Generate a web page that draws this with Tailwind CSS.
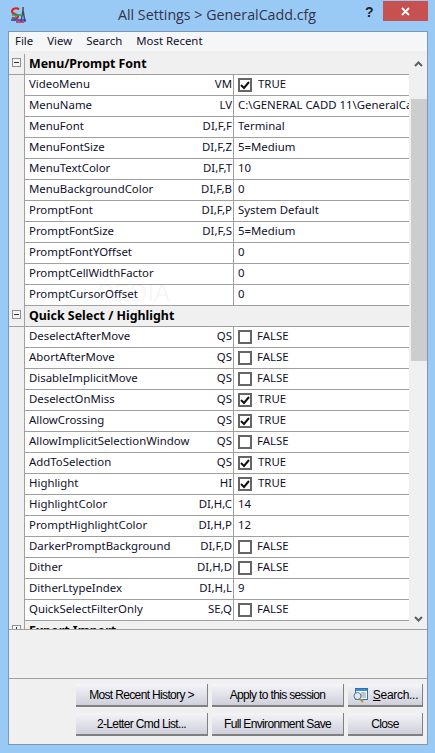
<!DOCTYPE html>
<html lang="en">
<head>
  <meta charset="UTF-8" />
  <title>All Settings</title>
  <script src="https://cdn.jsdelivr.net/npm/@tailwindcss/browser@4"></script>
</head>
<body class="bg-[#99c9f5] h-[753px] w-[435px] overflow-hidden relative font-['Noto_Sans',sans-serif] text-[11.4px] text-[#10102a]">
  <!-- Title bar -->
  <div class="h-[31px] flex relative">
    <svg class="absolute left-[10px] top-[6px]" width="17" height="18" viewBox="0 0 17 18">
      <path d="M9 3.500C7 1.500 2 2 2 5.500c0 3 6 2 6 5 0 2.500-4 2.500-6 1" fill="none" stroke="#e02020" stroke-width="2"/>
      <path d="M2 9h9M4 15l2-5" stroke="#20a050" stroke-width="1.300" fill="none"/>
      <path d="M11 16l2-12 2 12M13 1v4" stroke="#405060" stroke-width="1.500" fill="none"/>
      <path d="M1 14h15" stroke="#2040d0" stroke-width="1.500"/>
      <path d="M6 16h8" stroke="#e02020" stroke-width="1.500"/>
    </svg>
    <div class="flex-1 text-center pt-[4px] pr-[1px] text-[14.25px] text-[#33334a] font-['Open_Sans',sans-serif]">All Settings &gt; GeneralCadd.cfg</div>
    <div class="absolute left-[365px] top-[2px] text-[14px] font-bold font-['Liberation_Sans',sans-serif] text-[#222]">?</div>
    <div class="absolute left-[383px] top-[1px] w-[45px] h-[20px] bg-[#c75050] flex items-center justify-center">
      <svg width="9" height="9" viewBox="0 0 9 9"><path d="M1 1l7 7M8 1l-7 7" stroke="#fff" stroke-width="1.800"/></svg>
    </div>
  </div>

  <!-- Client area -->
  <div class="ml-[8px] w-[420px] h-[714px] bg-[#f0f0f0] border border-[#7e98b4] flex flex-col">
    <div class="h-[19px] bg-[#f5f6f7] flex items-center gap-[14px] pl-[6px] pb-[2px]">
      <span>File</span><span>View</span><span>Search</span><span>Most Recent</span>
    </div>

    <div class="mt-[3px] h-[576px] flex overflow-hidden border-b border-[#a0a0a0]">
      <div id="grid" class="w-[401px] overflow-hidden"></div>
      <!-- Scrollbar -->
      <div class="w-[17px] ml-[1px] bg-[#f0f0f0] flex flex-col items-center relative">
        <svg class="mt-[7px]" width="9" height="6" viewBox="0 0 9 6"><path d="M1 5l3.500-3.500L8 5" stroke="#606060" stroke-width="2" fill="none"/></svg>
        <div class="mt-[32px] w-[16px] h-[262px] bg-[#cdcdcd]"></div>
        <svg class="absolute bottom-[7px]" width="9" height="6" viewBox="0 0 9 6"><path d="M1 1l3.500 3.500L8 1" stroke="#606060" stroke-width="2" fill="none"/></svg>
      </div>
    </div>

    <!-- Status panel -->
    <div class="h-[49px] border-b border-[#a0a0a0] shrink-0"></div>

    <!-- Buttons -->
    <div class="grid grid-cols-[132px_132px_75px] gap-x-[4px] gap-y-[6px] pl-[67px] pt-[5px] font-['Liberation_Sans',sans-serif] text-[12px] tracking-[-0.65px] text-black">
      <button class="h-[23px] bg-gradient-to-b from-[#f4f4f8] to-[#d0d0dc] border-b-2 border-r border-[#808080]">Most Recent History &gt;</button>
      <button class="h-[23px] bg-gradient-to-b from-[#f4f4f8] to-[#d0d0dc] border-b-2 border-r border-[#808080]">Apply to this session</button>
      <button class="h-[23px] bg-gradient-to-b from-[#f4f4f8] to-[#d0d0dc] border-b-2 border-r border-[#808080] flex items-center justify-center gap-[5px]">
        <svg width="16" height="16" viewBox="0 0 16 16">
          <rect x="3.500" y="1.500" width="12" height="11" fill="#fff" stroke="#3070b0"/>
          <rect x="4" y="2" width="11" height="2" fill="#3f8fd0"/>
          <path d="M9 6h5M9 8h5M9 10h5" stroke="#7090b0"/>
          <circle cx="5.500" cy="9" r="3.500" fill="#d8ecf8" stroke="#607890"/>
          <path d="M8 12l3 3" stroke="#c09030" stroke-width="2"/>
        </svg>
        <span class="tracking-[-0.3px]"><u>S</u>earch...</span>
      </button>
      <button class="h-[23px] bg-gradient-to-b from-[#f4f4f8] to-[#d0d0dc] border-b-2 border-r border-[#808080]">2-Letter Cmd List...</button>
      <button class="h-[23px] bg-gradient-to-b from-[#f4f4f8] to-[#d0d0dc] border-b-2 border-r border-[#808080]">Full Environment Save</button>
      <button class="h-[23px] bg-gradient-to-b from-[#f4f4f8] to-[#d0d0dc] border-b-2 border-r border-[#808080]">Close</button>
    </div>
  </div>

  <!-- faint watermark lying over the grid -->
  <div class="absolute left-[98px] top-[281px] text-[24px] leading-none font-['Liberation_Sans',sans-serif] text-black/5 pointer-events-none">PEDIA</div>

  <script>
    // h = section header, rows are [name, code, value]; true/false draw a checkbox
    const rows = [
      ["h", "Menu/Prompt Font", "-"],
      ["VideoMenu", "VM", true],
      ["MenuName", "LV", "C:\\GENERAL CADD 11\\GeneralCadd"],
      ["MenuFont", "DI,F,F", "Terminal"],
      ["MenuFontSize", "DI,F,Z", "5=Medium"],
      ["MenuTextColor", "DI,F,T", "10"],
      ["MenuBackgroundColor", "DI,F,B", "0"],
      ["PromptFont", "DI,F,P", "System Default"],
      ["PromptFontSize", "DI,F,S", "5=Medium"],
      ["PromptFontYOffset", "", "0"],
      ["PromptCellWidthFactor", "", "0"],
      ["PromptCursorOffset", "", "0"],
      ["h", "Quick Select / Highlight", "-"],
      ["DeselectAfterMove", "QS", false],
      ["AbortAfterMove", "QS", false],
      ["DisableImplicitMove", "QS", false],
      ["DeselectOnMiss", "QS", true],
      ["AllowCrossing", "QS", true],
      ["AllowImplicitSelectionWindow", "QS", false],
      ["AddToSelection", "QS", true],
      ["Highlight", "HI", true],
      ["HighlightColor", "DI,H,C", "14"],
      ["PromptHighlightColor", "DI,H,P", "12"],
      ["DarkerPromptBackground", "DI,F,D", false],
      ["Dither", "DI,H,D", false],
      ["DitherLtypeIndex", "DI,H,L", "9"],
      ["QuickSelectFilterOnly", "SE,Q", false],
      ["h", "Export Import", "+"]
    ];

    const tick = '<path d="M3 7l3 3 5-6" stroke="#111" stroke-width="2" fill="none"/>';

    function box(sign) {
      const bar = sign === "+" ? '<path d="M4.500 2v5M2 4.500h5" stroke="#333"/>' : '<path d="M2 4.500h5" stroke="#333"/>';
      return `<svg width="9" height="9" viewBox="0 0 9 9" class="ml-[3px] mt-[1px]"><rect x=".5" y=".5" width="8" height="8" fill="#f4f4f4" stroke="#909090"/>${bar}</svg>`;
    }

    document.getElementById("grid").innerHTML = rows.map(r => {
      if (r[0] === "h") {
        return `<div class="h-[21px] flex border-b border-[#a0a0a0] bg-[#f0f0f0]">
          <div class="w-[16px] shrink-0 border-r border-[#a0a0a0] flex items-start pt-[3px]">${box(r[2])}</div>
          <div class="pl-[4px] font-bold text-[12.4px] text-black leading-[19px]">${r[1]}</div>
        </div>`;
      }
      const val = typeof r[2] === "boolean"
        ? `<svg width="14" height="14" viewBox="0 0 14 14" class="shrink-0 mr-[5px]"><rect x="1" y="1" width="12" height="12" fill="#fff" stroke="#666" stroke-width="2"/>${r[2] ? tick : ""}</svg><span class="${r[2] ? "pl-[1px]" : ""} pb-[2px]">${r[2] ? "TRUE" : "FALSE"}</span>`
        : `<span class="pb-[2px] whitespace-nowrap">${r[2]}</span>`;
      return `<div class="h-[21px] flex">
        <div class="w-[16px] shrink-0 border-r border-[#a0a0a0] bg-[#f0f0f0]"></div>
        <div class="w-[209px] shrink-0 flex justify-between items-center bg-white border-b border-r border-[#a0a0a0] pl-[4px] pr-[1px] pb-[2px]"><span>${r[0]}</span><span>${r[1]}</span></div>
        <div class="flex-1 min-w-0 overflow-hidden flex items-center bg-white border-b border-[#a0a0a0] pl-[4px]">${val}</div>
      </div>`;
    }).join("");
  </script>
</body>
</html>
